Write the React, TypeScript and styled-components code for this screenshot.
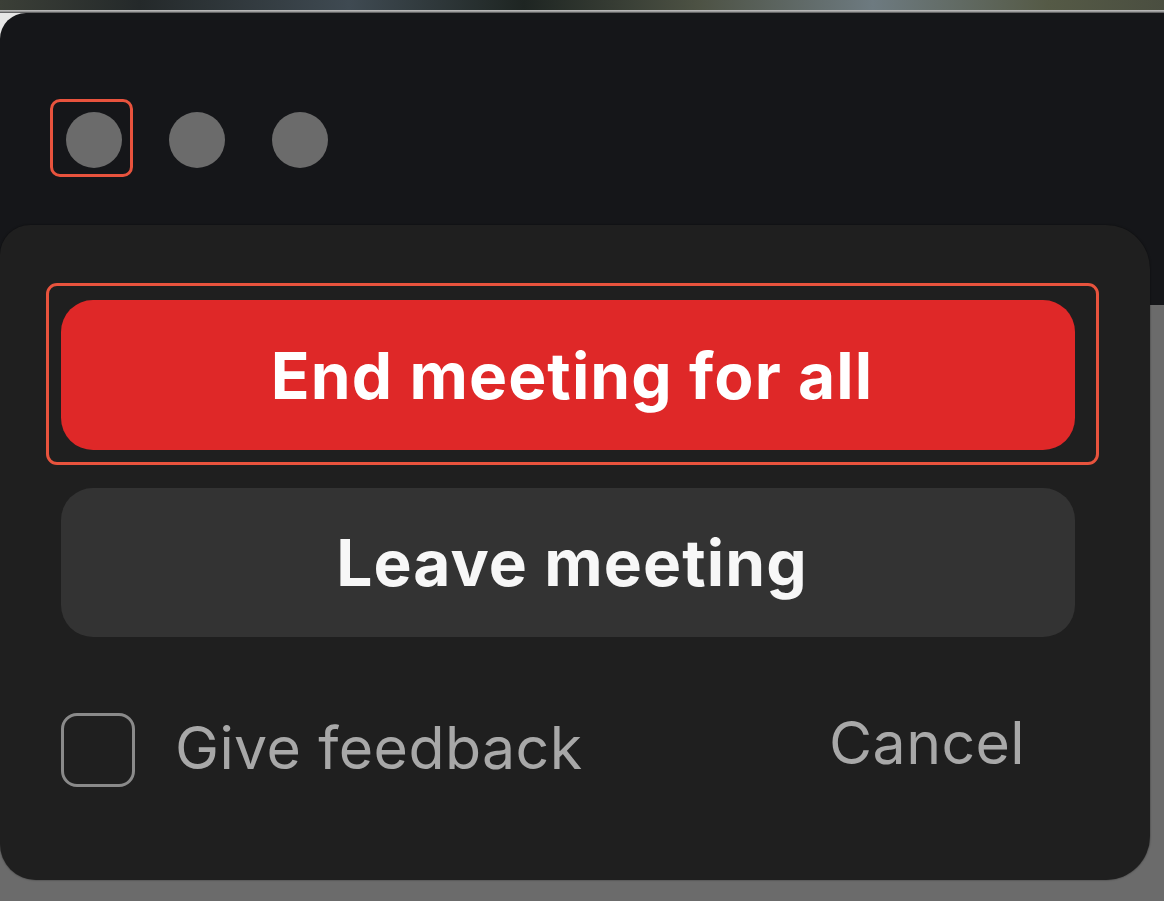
import React from "react";
import styled, { createGlobalStyle } from "styled-components";

const GlobalStyle = createGlobalStyle`
  html, body {
    margin: 0;
    padding: 0;
    background: #6b6b6b;
    overflow: hidden;
  }
  * {
    box-sizing: border-box;
  }
`;

const Screen = styled.div`
  width: 1164px;
  height: 901px;
  display: flex;
  flex-direction: column;
  font-family: Inter, "Liberation Sans", sans-serif;
  overflow: hidden;
`;

const DesktopStrip = styled.div`
  height: 10px;
  background: linear-gradient(
    90deg,
    #3b3f37 0%,
    #24292a 12%,
    #3f4a52 30%,
    #1e2522 45%,
    #4d5244 60%,
    #6d7a80 75%,
    #555a46 90%,
    #4a4e40 100%
  );
`;

const Bezel = styled.div`
  height: 3px;
  background: linear-gradient(180deg, #c4c4c4 0%, #9a9a9a 50%, #4a4a4c 100%);
`;

const WindowWrap = styled.div`
  background: #e6e6e6;
`;

const Window = styled.div`
  height: 292px;
  background: #151619;
  border-top-left-radius: 26px;
  padding: 99px 0 0 66px;
`;

const TitleBar = styled.div`
  display: flex;
  align-items: center;
  gap: 47px;
`;

const Light = styled.div`
  width: 56px;
  height: 56px;
  border-radius: 50%;
  background: #6b6b6b;
  filter: blur(0.6px);
`;

type Inset = [number, number, number, number];

const Highlight = styled.div<{ $inset: Inset; $radius: number; $inline?: boolean }>`
  display: ${(p) => (p.$inline ? "inline-flex" : "block")};
  border: 3px solid #e8533d;
  border-radius: ${(p) => p.$radius}px;
  padding: ${(p) => p.$inset.map((v) => `${v - 3}px`).join(" ")};
  margin: ${(p) => p.$inset.map((v) => `${-v}px`).join(" ")};
`;

const Panel = styled.div`
  position: relative;
  margin-top: -80px;
  width: 1150px;
  height: 655px;
  background: #1f1f1f;
  border-radius: 30px 44px 44px 36px;
  box-shadow: 0 0 2px rgba(0, 0, 0, 0.55);
  padding: 75px 75px 0 61px;
  display: flex;
  flex-direction: column;
`;

const ActionButton = styled.button<{ $tone: "danger" | "neutral" }>`
  width: 100%;
  height: ${(p) => (p.$tone === "danger" ? 150 : 149)}px;
  border: none;
  border-radius: 32px;
  background: ${(p) => (p.$tone === "danger" ? "#df2828" : "#333333")};
  color: ${(p) => (p.$tone === "danger" ? "#ffffff" : "#f7f7f7")};
  font-family: Inter, "Liberation Sans", sans-serif;
  font-weight: 700;
  font-size: 64px;
  letter-spacing: 1.1px;
  display: flex;
  align-items: center;
  justify-content: center;
  padding: 0 0 0 8px;
  cursor: pointer;
`;

const LeaveRow = styled.div`
  margin-top: 38px;
`;

const Footer = styled.div`
  margin-top: 76px;
  display: flex;
  align-items: center;
  justify-content: space-between;
  padding-right: 50px;
  height: 74px;
`;

const FeedbackLabel = styled.label`
  display: flex;
  align-items: center;
  gap: 40px;
`;

const Checkbox = styled.span`
  width: 74px;
  height: 74px;
  border: 3px solid #8a8a8a;
  border-radius: 16px;
  flex-shrink: 0;
`;

const FooterText = styled.span<{ $lift: number }>`
  font-size: 59px;
  line-height: 1;
  letter-spacing: 0.4px;
  color: #a8a8a8;
  padding-bottom: ${(p) => p.$lift * 2}px;
`;

export default function App() {
  return (
    <>
      <GlobalStyle />
      <Screen>
        <DesktopStrip />
        <Bezel />
        <WindowWrap>
          <Window>
            <TitleBar>
              <Highlight $inline $radius={10} $inset={[13, 11, 9, 16]}>
                <Light />
              </Highlight>
              <Light />
              <Light />
            </TitleBar>
          </Window>
        </WindowWrap>
        <Panel>
          <Highlight $radius={11} $inset={[17, 24, 15, 15]}>
            <ActionButton $tone="danger">End meeting for all</ActionButton>
          </Highlight>
          <LeaveRow>
            <ActionButton $tone="neutral">Leave meeting</ActionButton>
          </LeaveRow>
          <Footer>
            <FeedbackLabel>
              <Checkbox />
              <FooterText $lift={3}>Give feedback</FooterText>
            </FeedbackLabel>
            <FooterText $lift={8}>Cancel</FooterText>
          </Footer>
        </Panel>
      </Screen>
    </>
  );
}
